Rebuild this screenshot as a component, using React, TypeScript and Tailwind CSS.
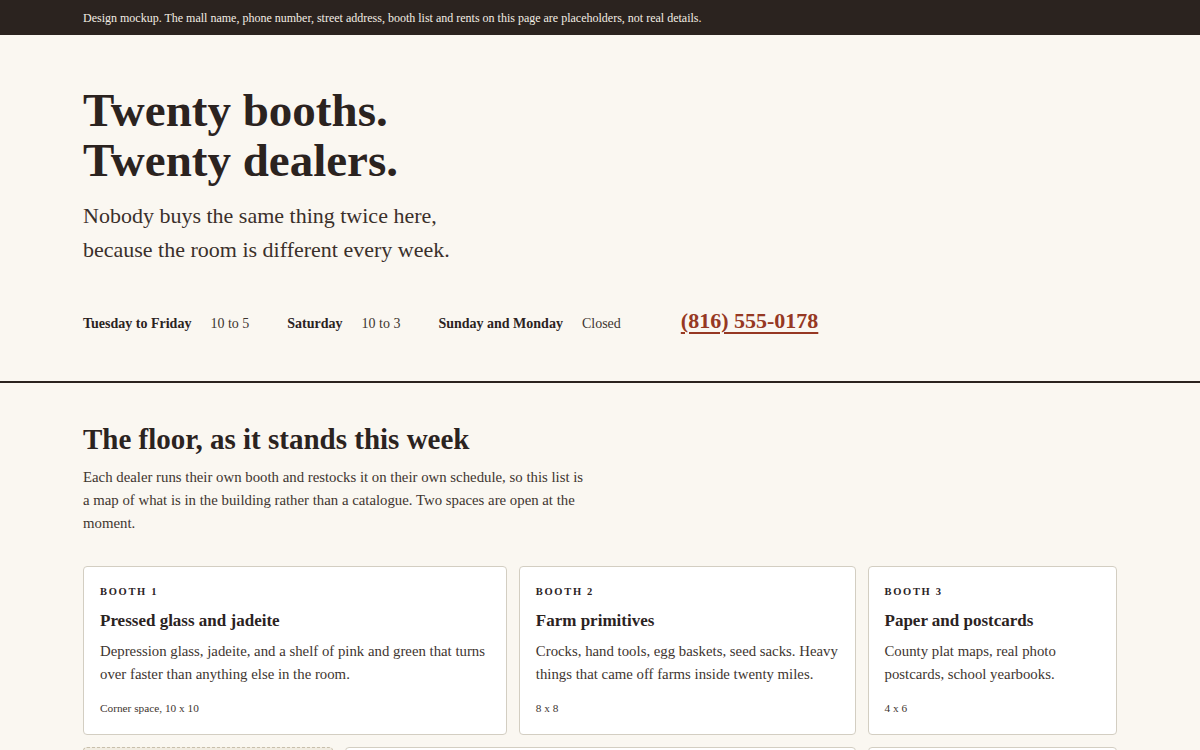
import React from "react";

type Booth = {
  label: string;
  title: string;
  body: string;
  meta: string;
  span: string;
  open?: boolean;
};

const booths: Booth[] = [
  {
    label: "Booth 1",
    title: "Pressed glass and jadeite",
    body: "Depression glass, jadeite, and a shelf of pink and green that turns over faster than anything else in the room.",
    meta: "Corner space, 10 x 10",
    span: "col-span-5",
  },
  {
    label: "Booth 2",
    title: "Farm primitives",
    body: "Crocks, hand tools, egg baskets, seed sacks. Heavy things that came off farms inside twenty miles.",
    meta: "8 x 8",
    span: "col-span-4",
  },
  {
    label: "Booth 3",
    title: "Paper and postcards",
    body: "County plat maps, real photo postcards, school yearbooks.",
    meta: "4 x 6",
    span: "col-span-3",
  },
  {
    label: "Booth 4",
    title: "Open",
    body: "A wall space by the front window. Ask at the counter.",
    meta: "4 x 8",
    span: "col-span-3",
    open: true,
  },
  {
    label: "Booth 5",
    title: "Mid-century kitchen",
    body: "Pyrex, enamel pots, chrome dinette chairs and the odd Formica table when one turns up.",
    meta: "10 x 12",
    span: "col-span-6",
  },
  {
    label: "Booth 6",
    title: "Quilts and linens",
    body: "Feed-sack quilts, tablecloths, embroidered pillowcases.",
    meta: "6 x 8",
    span: "col-span-3",
  },
];

const hours: [string, string][] = [
  ["Tuesday to Friday", "10 to 5"],
  ["Saturday", "10 to 3"],
  ["Sunday and Monday", "Closed"],
];

function BoothCard({ b }: { b: Booth }) {
  return (
    <div
      className={`${b.span} rounded-[4px] px-4 pt-[17px] pb-[18px] ${
        b.open
          ? "border border-dashed border-[#c8bfac] bg-[#f1ece1]"
          : "border border-[#d3cec2] bg-white"
      }`}
    >
      <div className="text-[10.5px] font-bold uppercase leading-[16px] tracking-[0.16em] text-[#2b231f]">
        {b.label}
      </div>
      <h3 className="mt-[10px] text-[17px] font-bold leading-[22px] text-[#2b231f]">
        {b.title}
      </h3>
      <p className="mt-[8px] text-[14.8px] leading-[23px] text-[#3e352f]">{b.body}</p>
      <div className="mt-[14px] text-[11.3px] leading-[16px] text-[#3e352f]">{b.meta}</div>
    </div>
  );
}

export default function App() {
  return (
    <div
      className="min-h-screen bg-[#faf7f1] text-[#2b231f]"
      style={{ fontFamily: '"Liberation Serif", "DejaVu Serif", serif' }}
    >
      <div className="flex h-[35px] items-center bg-[#2b231f] px-[83px] text-[12px] text-[#f3ede4]">
        Design mockup. The mall name, phone number, street address, booth list and rents on this page are placeholders, not real details.
      </div>

      <header className="px-[83px] pt-[50px] pb-[44px]">
        <h1 className="text-[47px] font-bold leading-[50px] text-[#2b231f]">
          Twenty booths.
          <br />
          Twenty dealers.
        </h1>
        <p className="mt-[14px] text-[22px] leading-[34px] text-[#3a302b]">
          Nobody buys the same thing twice here,
          <br />
          because the room is different every week.
        </p>
        <div className="mt-[44px] flex h-[26px] items-center text-[14px] leading-[20px]">
          {hours.map(([day, time]) => (
            <div key={day} className="mr-[38px] flex items-center gap-[19px]">
              <span className="font-bold text-[#2b231f]">{day}</span>
              <span className="text-[#3e352f]">{time}</span>
            </div>
          ))}
          <a
            href="#"
            className="ml-[22px] -mt-[6px] text-[22px] font-bold leading-[26px] text-[#963823] underline decoration-[2px] underline-offset-[4px]"
          >
            (816) 555-0178
          </a>
        </div>
      </header>

      <div className="h-[2px] bg-[#2b231f]" />

      <section className="px-[83px] pt-[38px]">
        <h2 className="text-[29px] font-bold leading-[36px] text-[#2b231f]">
          The floor, as it stands this week
        </h2>
        <p className="mt-[9px] max-w-[540px] text-[14.8px] leading-[23px] text-[#3e352f]">
          Each dealer runs their own booth and restocks it on their own schedule, so this list is
          <br />
          a map of what is in the building rather than a catalogue. Two spaces are open at the
          <br />
          moment.
        </p>
        <div className="mt-[31px] grid grid-cols-12 gap-3 pb-10">
          {booths.map((b) => (
            <BoothCard key={b.label} b={b} />
          ))}
        </div>
      </section>
    </div>
  );
}
